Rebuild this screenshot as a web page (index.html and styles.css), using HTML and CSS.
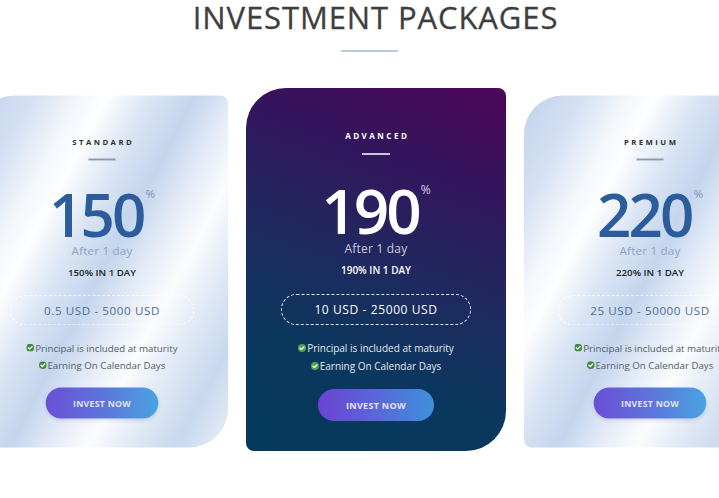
FILE: index.html
```html
<!DOCTYPE html>
<html>
<head>
<meta charset="utf-8">
<link rel="stylesheet" href="styles.css">
</head>
<body>
<section class="page">
  <h1 class="title">INVESTMENT PACKAGES</h1>
  <div class="title-line"></div>
  <div class="cards">
    <div class="card side">
      <div class="label">STANDARD</div>
      <div class="divider"></div>
      <div class="rate"><span class="num">150</span><span class="pct">%</span></div>
      <div class="after">After 1 day</div>
      <div class="daily">150% IN 1 DAY</div>
      <div class="range">0.5 USD - 5000 USD</div>
      <ul class="features">
        <li><svg class="chk" viewBox="0 0 10 10"><circle cx="5" cy="5" r="5"/><path d="M2.6 5.2 L4.3 6.8 L7.4 3.6"/></svg> Principal is included at maturity</li>
        <li><svg class="chk" viewBox="0 0 10 10"><circle cx="5" cy="5" r="5"/><path d="M2.6 5.2 L4.3 6.8 L7.4 3.6"/></svg>Earning On Calendar Days</li>
      </ul>
      <a class="btn">INVEST NOW</a>
    </div>
    <div class="card main">
      <div class="label">ADVANCED</div>
      <div class="divider"></div>
      <div class="rate"><span class="num">190</span><span class="pct">%</span></div>
      <div class="after">After 1 day</div>
      <div class="daily">190% IN 1 DAY</div>
      <div class="range">10 USD - 25000 USD</div>
      <ul class="features">
        <li><svg class="chk" viewBox="0 0 10 10"><circle cx="5" cy="5" r="5"/><path d="M2.6 5.2 L4.3 6.8 L7.4 3.6"/></svg> Principal is included at maturity</li>
        <li><svg class="chk" viewBox="0 0 10 10"><circle cx="5" cy="5" r="5"/><path d="M2.6 5.2 L4.3 6.8 L7.4 3.6"/></svg>Earning On Calendar Days</li>
      </ul>
      <a class="btn">INVEST NOW</a>
    </div>
    <div class="card side">
      <div class="label">PREMIUM</div>
      <div class="divider"></div>
      <div class="rate"><span class="num">220</span><span class="pct">%</span></div>
      <div class="after">After 1 day</div>
      <div class="daily">220% IN 1 DAY</div>
      <div class="range">25 USD - 50000 USD</div>
      <ul class="features">
        <li><svg class="chk" viewBox="0 0 10 10"><circle cx="5" cy="5" r="5"/><path d="M2.6 5.2 L4.3 6.8 L7.4 3.6"/></svg> Principal is included at maturity</li>
        <li><svg class="chk" viewBox="0 0 10 10"><circle cx="5" cy="5" r="5"/><path d="M2.6 5.2 L4.3 6.8 L7.4 3.6"/></svg>Earning On Calendar Days</li>
      </ul>
      <a class="btn">INVEST NOW</a>
    </div>
  </div>
</section>
</body>
</html>
```
FILE: styles.css
```css
* { box-sizing: border-box; }
html, body {
  margin: 0;
  padding: 0;
  background: #ffffff;
  overflow: hidden;
}
body {
  font-family: "Open Sans", "Liberation Sans", sans-serif;
  width: 719px;
  height: 498px;
}
.page {
  display: flex;
  flex-direction: column;
  padding-top: 2px;
}
.title {
  margin: 0;
  font-size: 31px;
  line-height: 30px;
  font-weight: 400;
  color: #3e3e3e;
  letter-spacing: 0.9px;
  text-align: center;
  padding-left: 32px;
  -webkit-text-stroke: 0.3px #3e3e3e;
}
.title-line {
  width: 57px;
  height: 2px;
  background: #b9cbdc;
  margin: 18px 0 0 341px;
}
.cards {
  display: flex;
  gap: 14px;
  width: 808px;
  margin: 36px 0 0 -28px;
}
.card {
  width: 260px;
  height: 363px;
  flex: none;
  border-radius: 40px 8px 40px 8px;
  display: flex;
  flex-direction: column;
  align-items: center;
  padding-top: 43px;
  text-align: center;
}
.card.side {
  transform: translateY(2px) scale(0.97);
  background:
    linear-gradient(118deg,
      #bfd1eb 0%,
      #d6e2f3 14%,
      #f4f7fc 24%,
      #fdfeff 30%,
      #dae5f4 40%,
      #c4d5ed 50%,
      #e6edf8 60%,
      #fbfcfe 68%,
      #dfe8f5 78%,
      #c8d8ee 88%,
      #eaf0f9 100%);
  color: #333;
}
.card.main {
  background: linear-gradient(200deg,
    #4d0659 0%,
    #32165d 25%,
    #1e2a5f 50%,
    #0b375e 72%,
    #033a5b 100%);
  color: #fff;
}
.label {
  font-size: 8px;
  line-height: 10px;
  font-weight: 700;
  letter-spacing: 2.5px;
  padding-left: 2.5px;
}
.side .label { color: #2e2e2e; }
.divider {
  width: 28px;
  height: 2px;
  margin-top: 12px;
}
.side .divider { background: #8f9aa8; }
.main .divider { background: #cfc3e0; }
.rate {
  display: flex;
  align-items: flex-start;
  margin-top: 28px;
}
.num {
  font-size: 62px;
  line-height: 54px;
  font-weight: 600;
  letter-spacing: -3px;
}
.side .num { color: #2c5c9c; }
.main .num { color: #ffffff; }
.pct {
  font-size: 12px;
  line-height: 12px;
  font-weight: 400;
  margin-top: 1px;
  margin-left: 2px;
}
.side .pct { color: #7e93b4; }
.main .pct { color: #d6d0e6; }
.after {
  font-size: 12px;
  line-height: 16px;
  margin-top: 4px;
  letter-spacing: 0.2px;
}
.side .after { color: #8ba2c6; }
.main .after { color: #cdc8dc; }
.daily {
  font-size: 10px;
  line-height: 14px;
  font-weight: 600;
  margin-top: 6px;
}
.side .daily { color: #222; }
.main .daily { color: #ffffff; }
.range {
  width: 190px;
  height: 31px;
  margin-top: 17px;
  border: 1px dashed rgba(255,255,255,0.9);
  border-radius: 16px;
  display: flex;
  align-items: center;
  justify-content: center;
  font-size: 12px;
  letter-spacing: 0.6px;
}
.side .range { color: #4d6e93; border-color: rgba(255,255,255,0.95); }
.main .range { color: #ffffff; }
.features {
  list-style: none;
  margin: 14px 0 0;
  padding: 0;
  font-size: 10px;
  line-height: 18px;
}
.features li {
  display: flex;
  align-items: center;
  justify-content: center;
  white-space: nowrap;
}
.side .features { color: #555c66; }
.main .features { color: #e4e8ef; }
.chk {
  width: 8px;
  height: 8px;
  margin-right: 1px;
}
.chk circle { fill: #3e8e3e; }
.main .chk circle { fill: #4fa64a; }
.chk path {
  fill: none;
  stroke: #ffffff;
  stroke-width: 1.6;
  stroke-linecap: round;
  stroke-linejoin: round;
}
.btn {
  width: 116px;
  height: 32px;
  margin-top: 14px;
  border-radius: 16px;
  display: flex;
  align-items: center;
  justify-content: center;
  font-size: 9px;
  font-weight: 700;
  letter-spacing: 0.3px;
  color: #e6e2f6;
  background: linear-gradient(90deg, #6a43d3 0%, #5a66d8 50%, #3f90dc 100%);
  box-shadow: 0 2px 4px rgba(40, 60, 140, 0.15);
}
.side .btn {
  background: linear-gradient(90deg, #6a4fd6 0%, #5d74dc 50%, #4aa3e0 100%);
}
```
